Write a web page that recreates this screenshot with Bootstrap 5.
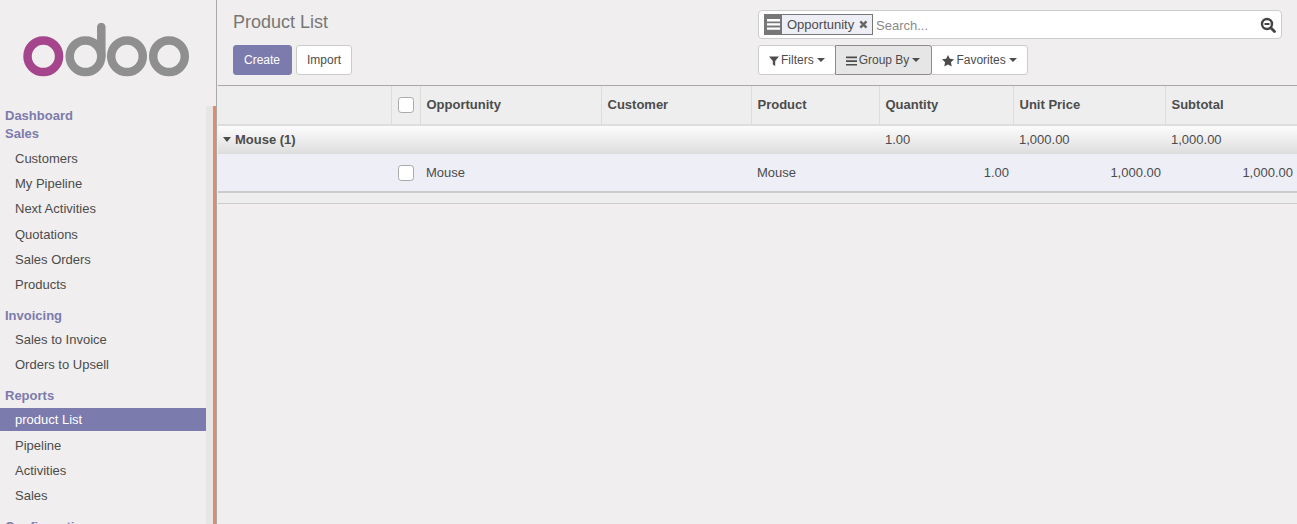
<!DOCTYPE html>
<html lang="en">
<head>
  <meta charset="UTF-8" />
  <title>Product List</title>
  <link href="https://cdn.jsdelivr.net/npm/bootstrap@5.3.2/dist/css/bootstrap.min.css" rel="stylesheet">
  <style>
    html, body { height: 100%; overflow: hidden; }
    body { background: #f0eeee; color: #4c4c4c; font-family: "Liberation Sans", Arial, sans-serif; font-size: 13px; }
    .app-shell { height: 524px; }

    .side-panel { width: 217px; flex: none; border-right: 1px solid #a9a9a9; }
    .logo-box { height: 106px; padding: 23px 0 0 23px; }
    .side-body { height: 418px; overflow: hidden; }
    .side-menu { width: 206px; flex: none; overflow: hidden; padding-top: 1px; }
    .scroll-track { width: 7px; background: #e6e6e6; flex: none; }
    .scroll-edge { width: 3px; background: #e58a66; flex: none; }
    .menu-head { display: block; padding: 0 5px; height: 18px; line-height: 18px; margin: 0; font-weight: 700; color: #7c7bad; text-decoration: none; }
    .menu-list { list-style: none; margin: 3px 0 11px; padding: 0; }
    .menu-list.menu-sales { margin-top: 4px; }
    .menu-list.menu-reports { margin-top: 2.8px; }
    .menu-list a { display: block; height: 23px; line-height: 23px; padding: 0 15px; margin-bottom: 2.2px; color: #4c4c4c; text-decoration: none; }
    .menu-list a.on { background: #7c7bad; color: #fff; margin-bottom: 2.9px; }

    .main-panel { min-width: 0; }
    .control-bar { height: 85px; padding: 9px 15px 0 16px; }
    .left-tools { width: 525px; flex: none; }
    .right-tools { width: 524px; flex: none; padding-top: 1px; }
    .page-title { font-size: 18px; line-height: 26px; font-weight: 400; color: #777; margin: 0 0 10px; }
    .tool-btn { font-size: 12px; height: 30px; padding: 0 10px; line-height: 28px; border-radius: 3px; }
    .btn-make { background: #7c7bad; border: 1px solid #7c7bad; color: #fff; padding-right: 11px; }
    .btn-plain { background: #fff; border: 1px solid #ccc; color: #4c4c4c; }
    .btn-plain.active { background: #e6e6e6 !important; border-color: #8c8c8c !important; color: #4c4c4c !important; padding-right: 11px; }
    .tool-glyph { margin-right: 2px; }
    .search-row { height: 29px; background: #fff; border: 1px solid #ccc; border-radius: 4px; padding: 0 5px 0 5px; margin-bottom: 6px; }
    .facet-icon { width: 18px; height: 21px; background: #777; flex: none; }
    .facet-text { height: 21px; width: 91px; flex: none; padding: 1px 4px 0 5px; background: #eeeef6; border: 1px solid #777; border-left: 0; }
    .facet-text svg { margin-left: 5px; margin-top: -1px; }
    .search-hint { color: #8a8a8a; margin-left: 3px; padding-top: 2px; }
    .tool-btn.dropdown-toggle::after { vertical-align: 2px; border-top-width: 4px; border-left-width: 4px; border-right-width: 4px; margin-left: 3px; }

    .grid-wrap { margin-left: 1px; }
    .list-grid { table-layout: fixed; width: 1079px; margin: 0; border-collapse: collapse; --bs-table-bg: transparent; --bs-table-color: #4c4c4c; color: #4c4c4c; }
    .list-grid th, .list-grid td { padding: 0 5px 0 6px; vertical-align: middle; border: 0; font-size: 13px; white-space: nowrap; }
    .list-grid thead th { height: 39px; background: #eee; border-top: 1px solid #a9a9a9; border-bottom: 2px solid #ddd; border-left: 1px solid #ddd; font-weight: 700; }
    .list-grid thead th:first-child { border-left: 0; }
    .group-row td { height: 29px; background: linear-gradient(#fcfcfc, #ddd); padding-top: 1px; }
    .list-grid .group-name { font-weight: 700; padding-left: 5px; }
    .group-caret { display: inline-block; border-top: 5px solid #4c4c4c; border-left: 4px solid transparent; border-right: 4px solid transparent; margin-right: 4px; vertical-align: 2px; }
    .data-row td { height: 38px; background: #eeeef6; border-bottom: 2px solid #ccc; padding-top: 1px; }
    .list-grid .box-cell { padding-left: 6px; }
    .list-grid .data-row .box-cell { padding-left: 7px; }
    .row-check { width: 16px; height: 16px; margin: 0; display: block; border: 1px solid #aaa; border-radius: 4px; background: #fff; }
    .list-grid .num-cell { text-align: right; padding-right: 4px; }
    .grid-foot { height: 11px; width: 1079px; border-bottom: 1px solid #ccc; background: #eee; }
  </style>
</head>
<body>
  <div class="app-shell d-flex">
    <aside class="side-panel d-flex flex-column">
      <div class="logo-box">
        <svg width="168" height="56" viewBox="0 0 168 56" role="img" aria-label="odoo">
          <circle cx="20.300" cy="33.300" r="15.800" fill="none" stroke="#a5468c" stroke-width="8.500"/>
          <circle cx="62.500" cy="33.300" r="15.800" fill="none" stroke="#8f8f8f" stroke-width="8.500"/>
          <path d="M78.300 33V4" fill="none" stroke="#8f8f8f" stroke-width="8.500" stroke-linecap="round"/>
          <circle cx="104" cy="33.300" r="15.800" fill="none" stroke="#8f8f8f" stroke-width="8.500"/>
          <circle cx="146" cy="33.300" r="15.800" fill="none" stroke="#8f8f8f" stroke-width="8.500"/>
        </svg>
      </div>
      <div class="side-body d-flex">
        <nav class="side-menu">
          <a class="menu-head" href="#">Dashboard</a>
          <a class="menu-head" href="#">Sales</a>
          <ul class="menu-list menu-sales">
            <li><a href="#">Customers</a></li>
            <li><a href="#">My Pipeline</a></li>
            <li><a href="#">Next Activities</a></li>
            <li><a href="#">Quotations</a></li>
            <li><a href="#">Sales Orders</a></li>
            <li><a href="#">Products</a></li>
          </ul>
          <a class="menu-head" href="#">Invoicing</a>
          <ul class="menu-list">
            <li><a href="#">Sales to Invoice</a></li>
            <li><a href="#">Orders to Upsell</a></li>
          </ul>
          <a class="menu-head" href="#">Reports</a>
          <ul class="menu-list menu-reports">
            <li><a class="on" href="#">product List</a></li>
            <li><a href="#">Pipeline</a></li>
            <li><a href="#">Activities</a></li>
            <li><a href="#">Sales</a></li>
          </ul>
          <a class="menu-head" href="#">Configuration</a>
        </nav>
        <div class="scroll-track"></div>
        <div class="scroll-edge"></div>
      </div>
    </aside>

    <main class="main-panel flex-grow-1">
      <div class="control-bar d-flex">
        <div class="left-tools">
          <h1 class="page-title">Product List</h1>
          <div class="d-flex gap-1">
            <button type="button" class="btn tool-btn btn-make">Create</button>
            <button type="button" class="btn tool-btn btn-plain">Import</button>
          </div>
        </div>
        <div class="right-tools">
          <div class="search-row d-flex align-items-center">
            <span class="facet-icon d-flex align-items-center justify-content-center">
              <svg width="13" height="11" viewBox="0 0 13 11"><path d="M0 0h13v2.400H0zM0 4.200h13v2.400H0zM0 8.400h13v2.400H0z" fill="#fff"/></svg>
            </span>
            <span class="facet-text d-flex align-items-center">Opportunity
              <svg width="9" height="9" viewBox="0 0 10 10"><path d="M1.500 1.500l7 7M8.500 1.500l-7 7" stroke="#666" stroke-width="2.800" fill="none"/></svg>
            </span>
            <span class="search-hint flex-grow-1">Search...</span>
            <svg width="16" height="16" viewBox="0 0 16 16"><circle cx="7" cy="7" r="5" fill="none" stroke="#444" stroke-width="2.400"/><path d="M10.800 10.800L14.500 14.500" stroke="#444" stroke-width="2.800" stroke-linecap="round"/><path d="M4.500 7h5" stroke="#444" stroke-width="2"/></svg>
          </div>
          <div class="btn-group">
            <button type="button" class="btn tool-btn btn-plain dropdown-toggle">
              <svg class="tool-glyph" width="10" height="10" viewBox="0 0 10 10"><path d="M0 .5h10L6.200 5v5L3.800 8.500V5z" fill="#4c4c4c"/></svg>Filters</button>
            <button type="button" class="btn tool-btn btn-plain dropdown-toggle active">
              <svg class="tool-glyph" width="11" height="10" viewBox="0 0 11 10"><path d="M0 .5h11v1.700H0zM0 4.200h11v1.700H0zM0 7.900h11v1.700H0z" fill="#4c4c4c"/></svg>Group By</button>
            <button type="button" class="btn tool-btn btn-plain dropdown-toggle">
              <svg class="tool-glyph" width="12" height="12" viewBox="0 0 11 11"><path d="M5.500 0l1.700 3.500 3.800.5-2.800 2.700.7 3.800-3.400-1.800-3.400 1.800.7-3.800L0 4l3.800-.5z" fill="#4c4c4c"/></svg>Favorites</button>
          </div>
        </div>
      </div>

      <div class="grid-wrap">
        <table class="table list-grid">
          <colgroup>
            <col style="width:173px"><col style="width:29px"><col style="width:181px"><col style="width:150px"><col style="width:128px"><col style="width:134px"><col style="width:152px"><col style="width:132px">
          </colgroup>
          <thead>
            <tr>
              <th></th>
              <th class="box-cell"><input class="row-check form-check-input" type="checkbox" aria-label="Select all"></th>
              <th>Opportunity</th>
              <th>Customer</th>
              <th>Product</th>
              <th>Quantity</th>
              <th>Unit Price</th>
              <th>Subtotal</th>
            </tr>
          </thead>
          <tbody>
            <tr class="group-row">
              <td class="group-name" colspan="5"><span class="group-caret"></span>Mouse (1)</td>
              <td>1.00</td>
              <td>1,000.00</td>
              <td>1,000.00</td>
            </tr>
            <tr class="data-row">
              <td></td>
              <td class="box-cell"><input class="row-check form-check-input" type="checkbox" aria-label="Select row"></td>
              <td>Mouse</td>
              <td></td>
              <td>Mouse</td>
              <td class="num-cell">1.00</td>
              <td class="num-cell">1,000.00</td>
              <td class="num-cell">1,000.00</td>
            </tr>
          </tbody>
        </table>
        <div class="grid-foot"></div>
      </div>
    </main>
  </div>
  <script src="https://cdn.jsdelivr.net/npm/bootstrap@5.3.2/dist/js/bootstrap.bundle.min.js"></script>
</body>
</html>
